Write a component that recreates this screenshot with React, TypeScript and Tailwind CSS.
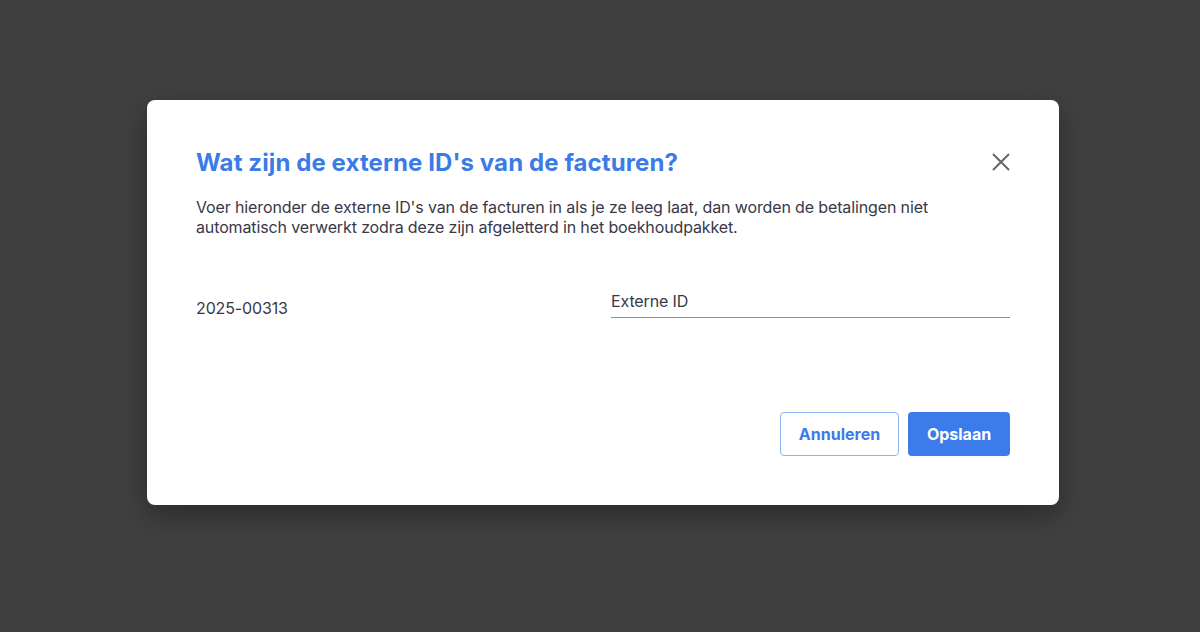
import React from "react";

export default function App() {
  return (
    <div className="w-[1200px] h-[632px] bg-[#404040] flex items-start justify-center pt-[100px] pl-[6px] font-['Inter',sans-serif]">
      <div className="w-[912px] h-[405px] bg-white rounded-[8px] shadow-[0_10px_30px_rgba(0,0,0,0.35)] px-[49px] pt-[46px] pb-[49px] flex flex-col">
        <div className="flex items-start justify-between">
          <h2 className="text-[24px] leading-[34px] font-bold text-[#3b7be8] tracking-[0.1px]">
            Wat zijn de externe ID's van de facturen?
          </h2>
          <button className="mt-[7px] w-[18px] h-[18px] flex items-center justify-center text-[#666]">
            <svg width="18" height="18" viewBox="0 0 18 18" fill="none" stroke="currentColor" strokeWidth="2">
              <path d="M1 1L17 17M17 1L1 17" />
            </svg>
          </button>
        </div>
        <p className="mt-[17px] text-[16px] leading-[20px] tracking-[-0.13px] text-[#383848] w-[780px]">
          Voer hieronder de externe ID's van de facturen in als je ze leeg laat, dan worden de betalingen niet automatisch verwerkt zodra deze zijn afgeletterd in het boekhoudpakket.
        </p>
        <div className="mt-[52px] grid grid-cols-2 gap-[16px]">
          <div className="text-[16px] leading-[20px] tracking-[-0.13px] text-[#383848] pt-[9px]">2025-00313</div>
          <div className="border-b border-[#8f8f8f] pb-[3px]">
            <input
              placeholder="Externe ID"
              className="w-full outline-none text-[16px] leading-[20px] tracking-[-0.13px] text-[#383848] placeholder:text-[#383848] bg-transparent"
            />
          </div>
        </div>
        <div className="mt-auto flex justify-end gap-[9px]">
          <button className="w-[119px] h-[44px] rounded-[4px] border border-[#8fb3ee] text-[#3b7be8] font-bold text-[16px]">
            Annuleren
          </button>
          <button className="w-[102px] h-[44px] rounded-[4px] bg-[#3b7bea] text-white font-bold text-[16px]">
            Opslaan
          </button>
        </div>
      </div>
    </div>
  );
}
